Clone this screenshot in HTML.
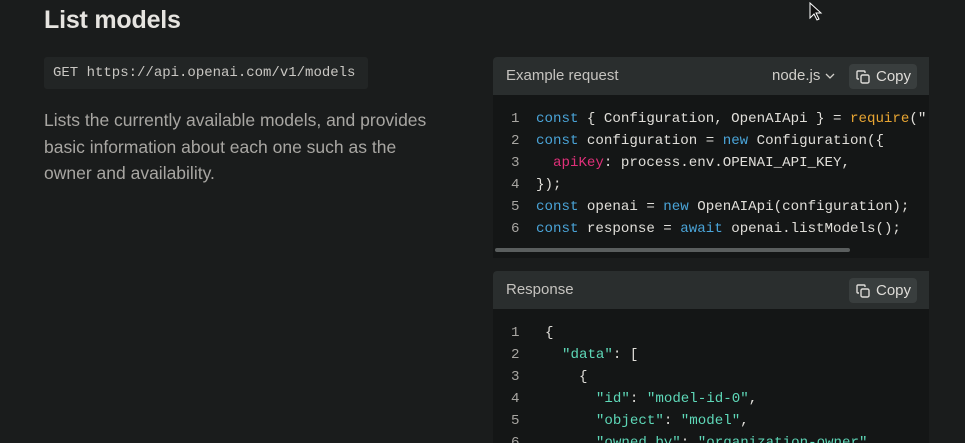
<!DOCTYPE html>
<html><head><style>
body{margin:0;width:965px;height:443px;background:#1a1c1c;overflow:hidden;font-family:"Liberation Sans",sans-serif;position:relative}
h1{position:absolute;left:44px;top:6px;margin:0;font-size:25px;font-weight:bold;color:#e6e4e0;letter-spacing:-0.2px}
.get{position:absolute;left:44px;top:57px;width:324px;height:32px;background:#222525;border-radius:3px;font:14px "Liberation Mono",monospace;color:#c9c7c3;line-height:32px;padding-left:9px;box-sizing:border-box}
.p{position:absolute;left:44px;top:107px;width:400px;font-size:17.5px;line-height:26.5px;color:#a8a6a2}
.card{position:absolute;left:493px;width:436px;background:#141616;border-radius:4px 0 0 0;overflow:hidden}
.hd{height:38px;background:#2a2e2e;color:#c5c3bf;font-size:15px;line-height:38px;padding-left:13px;position:relative}
.copy{position:absolute;right:12px;top:7px;width:68px;height:25px;background:#393e3e;border-radius:4px;line-height:25px;color:#dedcd8;font-size:15px;box-sizing:border-box;padding-left:27px}
.copy svg{position:absolute;left:7px;top:6px}
.code{font:14.15px "Liberation Mono",monospace;color:#e0ded9;padding-top:13px}
.l{height:22px;line-height:22px;position:relative}
.n{position:absolute;left:18px;color:#a8a6a2}
.c{position:absolute;left:43px;white-space:pre}
.k{color:#4aa4d8}.r{color:#e8a532}.a{color:#df3079}.g{color:#5ed8b8}
</style></head><body>
<h1>List models</h1>
<div class="get">GET https://api.openai.com/v1/models</div>
<div class="p">Lists the currently available models, and provides basic information about each one such as the owner and availability.</div>

<div class="card" style="top:57px;height:201px">
<div class="hd">Example request<span style="position:absolute;left:279px;color:#d0cec9">node.js <svg width="10" height="8" viewBox="0 0 10 8"><path d="M1 2l4 4 4-4" stroke="#d0cec9" fill="none" stroke-width="1.3"/></svg></span>
<div class="copy"><svg width="14" height="14" viewBox="0 0 14 14" fill="none" stroke="#dedcd8" stroke-width="1.4"><path d="M9 3V2a1 1 0 0 0-1-1H2a1 1 0 0 0-1 1v6a1 1 0 0 0 1 1h1"/><rect x="5" y="5" width="8" height="8" rx="1.5"/></svg>Copy</div></div>
<div class="code">
<div class="l"><span class="n">1</span><span class="c"><span class="k">const</span> { Configuration, OpenAIApi } = <span class="r">require</span>("</span></div>
<div class="l"><span class="n">2</span><span class="c"><span class="k">const</span> configuration = <span class="k">new</span> Configuration({</span></div>
<div class="l"><span class="n">3</span><span class="c">  <span class="a">apiKey</span>: process.env.OPENAI_API_KEY,</span></div>
<div class="l"><span class="n">4</span><span class="c">});</span></div>
<div class="l"><span class="n">5</span><span class="c"><span class="k">const</span> openai = <span class="k">new</span> OpenAIApi(configuration);</span></div>
<div class="l"><span class="n">6</span><span class="c"><span class="k">const</span> response = <span class="k">await</span> openai.listModels();</span></div>
</div>
<div style="position:absolute;left:2px;top:191px;width:355px;height:4px;background:#5a5e5e;border-radius:2px"></div>
</div>

<div class="card" style="top:271px;height:172px">
<div class="hd">Response<div class="copy"><svg width="14" height="14" viewBox="0 0 14 14" fill="none" stroke="#dedcd8" stroke-width="1.4"><path d="M9 3V2a1 1 0 0 0-1-1H2a1 1 0 0 0-1 1v6a1 1 0 0 0 1 1h1"/><rect x="5" y="5" width="8" height="8" rx="1.5"/></svg>Copy</div></div>
<div class="code">
<div class="l"><span class="n">1</span><span class="c" style="left:52px">{</span></div>
<div class="l"><span class="n">2</span><span class="c" style="left:52px">  <span class="g">"data"</span>: [</span></div>
<div class="l"><span class="n">3</span><span class="c" style="left:52px">    {</span></div>
<div class="l"><span class="n">4</span><span class="c" style="left:52px">      <span class="g">"id"</span>: <span class="g">"model-id-0"</span>,</span></div>
<div class="l"><span class="n">5</span><span class="c" style="left:52px">      <span class="g">"object"</span>: <span class="g">"model"</span>,</span></div>
<div class="l"><span class="n">6</span><span class="c" style="left:52px">      <span class="g">"owned_by"</span>: <span class="g">"organization-owner"</span>,</span></div>
</div>
</div>
<svg style="position:absolute;left:809px;top:2px" width="14" height="20" viewBox="0 0 14 20"><path d="M1 1v15l4-4 3 6 2-1-3-6h5z" fill="#111" stroke="#fff" stroke-width="1"/></svg>
</body></html>
